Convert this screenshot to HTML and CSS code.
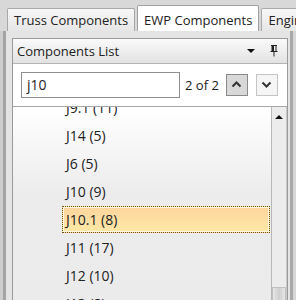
FILE: index.html
```html
<!DOCTYPE html>
<html lang="en">
<head>
  <meta charset="UTF-8"/>
  <title>Components List</title>
  <link rel="stylesheet" href="styles.css">
</head>
<body>
  <!-- Tabs -->
  <div class="tabstrip">
    <div class="tab">Truss Components</div>
    <div class="tab active">EWP Components</div>
    <div class="tab">Engineering</div>
  </div>

  <div class="content">
    <div class="panel">
      <div class="panel-head">
        <span class="title">Components List</span>
        <span class="drop"></span>
        <svg class="pin" width="8" height="12" viewBox="0 0 8 12">
          <path d="M1 .5h6M2 .5v6M6 .5v6M.5 6.5h7M4 6.5v5" stroke="#222" stroke-width="1" fill="none"/>
          <path d="M2 .5h2v6H2z" fill="#222"/>
        </svg>
      </div>

      <!-- Search -->
      <div class="search">
        <div class="input">j10</div>
        <span class="count">2 of 2</span>
        <div class="nav-btn pressed">
          <svg width="11" height="7" viewBox="0 0 11 7"><path d="M1.5 5.5 5.5 1.5 9.5 5.5" stroke="#333" stroke-width="2" fill="none"/></svg>
        </div>
        <div class="nav-btn">
          <svg width="11" height="7" viewBox="0 0 11 7"><path d="M1.5 1.5 5.5 5.5 9.5 1.5" stroke="#333" stroke-width="2" fill="none"/></svg>
        </div>
      </div>

      <!-- List -->
      <div class="list-wrap">
        <ul class="list">
          <li>J9.1 (11)</li>
          <li>J14 (5)</li>
          <li>J6 (5)</li>
          <li>J10 (9)</li>
          <li class="hit">J10.1 (8)</li>
          <li>J11 (17)</li>
          <li>J12 (10)</li>
          <li>J13 (8)</li>
        </ul>
        <div class="scroll">
          <span class="up"></span>
          <span class="thumb"></span>
        </div>
      </div>
    </div>
  </div>
</body>
</html>
```

FILE: styles.css
```css
* { box-sizing: border-box; margin: 0; padding: 0; }
html, body { width: 296px; height: 300px; overflow: hidden; }
body {
  font-family: 'Open Sans', 'Noto Sans', sans-serif;
  font-size: 13px;
  color: #222;
  background: #d8d8d8;
}

/* Tabs */
.tabstrip {
  height: 31px;
  display: flex;
  align-items: flex-end;
  gap: 2px;
  padding-left: 7px;
  white-space: nowrap;
}
.tab {
  height: 23px;
  padding: 1px 6px 0;
  line-height: 20px;
  border: 1px solid #a8a8a8;
  border-bottom: none;
  border-radius: 2px 2px 0 0;
  background: linear-gradient(#f7f7f7, #e6e6e6);
  flex-shrink: 0;
}
.tab.active {
  height: 26px;
  padding-top: 4px;
  background: #fff;
  border-color: #a0a0a0;
}

/* Content frame */
.content {
  height: 269px;
  padding: 7px 8px 0 12px;
  background: #e4e4e4;
  border-left: 3px solid #cdcdcd;
  box-shadow: inset 3px 0 0 #a4a4a4, inset -3px 0 0 #a8a8a8;
  border-right: 3px solid #d6d6d6;
  margin-left: 0;
}
.content { padding-left: 9px; padding-right: 5px; }

.panel {
  height: 100%;
  border: 1px solid #9a9a9a;
  border-bottom: none;
  display: flex;
  flex-direction: column;
  background: #fff;
}
.panel-head {
  height: 25px;
  display: flex;
  align-items: center;
  padding: 0 9px 0 4px;
  background: linear-gradient(#fafafa, #e2e2e2);
  border-bottom: 1px solid #b4b4b4;
}
.title { flex: 1; }
.drop {
  width: 0; height: 0;
  border-left: 4px solid transparent;
  border-right: 4px solid transparent;
  border-top: 4px solid #111;
  margin-right: 15px;
}

/* Search */
.search {
  height: 43px;
  display: flex;
  align-items: center;
  padding: 0 9px 1px 8px;
  background: #fff;
  border-bottom: 1px solid #a8a8a8;
}
.input {
  width: 159px;
  height: 26px;
  border: 1px solid #8e8e8e;
  padding-left: 5px;
  line-height: 23px;
  font-size: 14px;
}
.count { margin: 0 7px 0 5px; font-size: 13px; }
.nav-btn {
  width: 22px; height: 22px;
  margin-left: 0;
  border: 1px solid #c4c4c4;
  background: #f5f5f5;
  display: flex;
  align-items: center;
  justify-content: center;
}
.nav-btn + .nav-btn { margin-left: 8px; }
.nav-btn.pressed {
  background: #d8d8d8;
  border-color: #8a8a8a;
}

/* List */
.list-wrap {
  flex: 1;
  display: flex;
  overflow: hidden;
  background: linear-gradient(#ffffff, #ececec 45%, #ebebeb);
}
.list {
  flex: 1;
  list-style: none;
  margin-top: -13px;
  padding: 0 1px 0 49px;
}
.list li {
  height: 28px;
  line-height: 28px;
  padding-left: 4px;
  font-size: 14px;
}
.list li.hit {
  height: 27px;
  line-height: 25px;
  margin-bottom: 1px;
  border: 1px dotted #6b5312;
  background: linear-gradient(#fdd59e, #fee9a6);
  box-shadow: inset 0 0 0 1px #fff6e4;
  padding-left: 3px;
}
.scroll {
  width: 16px;
  display: flex;
  flex-direction: column;
  align-items: center;
  justify-content: space-between;
  border-left: 1px solid #b8b8b8;
  border-right: 1px solid #c8c8c8;
  background: #ececec;
  padding: 8px 0 0;
}
.up {
  width: 0; height: 0;
  border-left: 4px solid transparent;
  border-right: 4px solid transparent;
  border-bottom: 4px solid #111;
}
.thumb {
  width: 14px;
  height: 13px;
  background: linear-gradient(90deg, #e6e6e6, #cfcfcf 50%, #e6e6e6);
  border: 1px solid #c0c0c0;
  border-bottom: none;
}
```
